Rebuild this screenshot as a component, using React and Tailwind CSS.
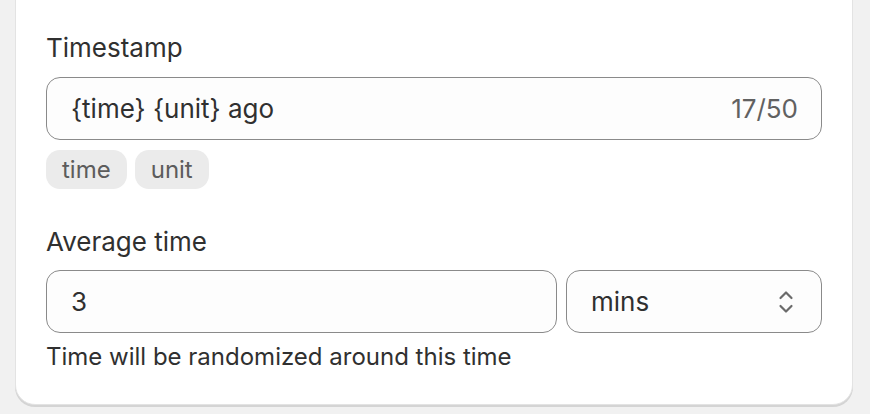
import { useState } from "react";

// Chevron up/down icon used in the select control.
function SelectIcon() {
  return (
    <svg width="20" height="26" viewBox="0 0 20 26" fill="none">
      <path d="M4.5 9 L10 3.5 L15.5 9" stroke="#6b6b6b" strokeWidth="2.2" strokeLinecap="round" strokeLinejoin="round" />
      <path d="M4.5 17 L10 22.5 L15.5 17" stroke="#6b6b6b" strokeWidth="2.2" strokeLinecap="round" strokeLinejoin="round" />
    </svg>
  );
}

export default function App() {
  const [template] = useState("{time} {unit} ago");

  return (
    <div
      className="h-[414px] overflow-hidden bg-[#f1f1f1] pl-[15px] pr-[17px] text-[#303030]"
      style={{ fontFamily: "Inter, 'Noto Sans', sans-serif" }}
    >
      {/* Card, top edge runs off screen */}
      <div className="-mt-[30px] rounded-[20px] border border-[#e3e3e3] bg-white px-[30px] pt-[60px] pb-[30px] shadow-[0_2px_0_#d4d4d4]">
        {/* Timestamp field */}
        <div className="text-[26px] leading-[34px]">Timestamp</div>
        <div className="mt-[12px] flex h-[63px] items-center justify-between rounded-[14px] border border-[#8a8a8a] bg-[#fdfdfd] pl-[24px] pr-[23px] text-[26px]">
          <span>{template}</span>
          <span className="text-[#616161]">{template.length}/50</span>
        </div>
        <div className="mt-[10px] flex gap-[8px]">
          <span className="flex h-[39px] items-center rounded-[14px] bg-[#ebebeb] px-[16px] text-[24px] text-[#5c5c5c]">time</span>
          <span className="flex h-[39px] items-center rounded-[14px] bg-[#ebebeb] px-[16px] text-[24px] text-[#5c5c5c]">unit</span>
        </div>

        {/* Average time field */}
        <div className="mt-[36px] text-[26px] leading-[34px]">Average time</div>
        <div className="mt-[11px] flex gap-[9px]">
          <div className="flex h-[63px] flex-1 items-center rounded-[14px] border border-[#8a8a8a] bg-[#fdfdfd] pl-[24px] text-[26px]">
            3
          </div>
          <div className="flex h-[63px] w-[256px] items-center justify-between rounded-[14px] border border-[#8a8a8a] bg-[#fdfdfd] pl-[24px] pr-[25px] text-[26px]">
            <span>mins</span>
            <SelectIcon />
          </div>
        </div>
        <div className="mt-[7px] text-[24px] leading-[34px]">Time will be randomized around this time</div>
      </div>
    </div>
  );
}
